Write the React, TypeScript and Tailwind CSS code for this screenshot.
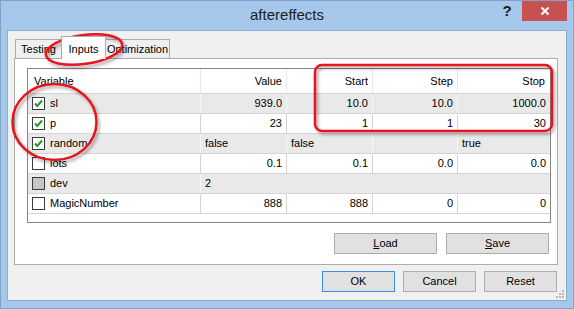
import React from "react";

type CBState = "on" | "off" | "gray";

function CheckBox({ state }: { state: CBState }) {
  return (
    <div
      className={`w-[13px] h-[13px] border border-[#3c3c3c] flex items-center justify-center shrink-0 ${
        state === "gray" ? "bg-[#c6c6c6]" : "bg-white"
      }`}
    >
      {state === "on" && (
        <svg width="11" height="11" viewBox="0 0 11 11">
          <path d="M2 5.5 L4.3 8 L9 2.5" stroke="#1f9a1f" strokeWidth="2" fill="none" />
        </svg>
      )}
    </div>
  );
}

type Cell = { t: string; a: "l" | "r" };

type Row = {
  name: string;
  cb: CBState;
  gray: boolean;
  cells: Cell[];
  span?: boolean;
};

const rows: Row[] = [
  {
    name: "sl",
    cb: "on",
    gray: true,
    cells: [
      { t: "939.0", a: "r" },
      { t: "10.0", a: "r" },
      { t: "10.0", a: "r" },
      { t: "1000.0", a: "r" },
    ],
  },
  {
    name: "p",
    cb: "on",
    gray: false,
    cells: [
      { t: "23", a: "r" },
      { t: "1", a: "r" },
      { t: "1", a: "r" },
      { t: "30", a: "r" },
    ],
  },
  {
    name: "random",
    cb: "on",
    gray: true,
    cells: [
      { t: "false", a: "l" },
      { t: "false", a: "l" },
      { t: "", a: "l" },
      { t: "true", a: "l" },
    ],
  },
  {
    name: "lots",
    cb: "off",
    gray: false,
    cells: [
      { t: "0.1", a: "r" },
      { t: "0.1", a: "r" },
      { t: "0.0", a: "r" },
      { t: "0.0", a: "r" },
    ],
  },
  {
    name: "dev",
    cb: "gray",
    gray: true,
    span: true,
    cells: [{ t: "2", a: "l" }],
  },
  {
    name: "MagicNumber",
    cb: "off",
    gray: false,
    cells: [
      { t: "888", a: "r" },
      { t: "888", a: "r" },
      { t: "0", a: "r" },
      { t: "0", a: "r" },
    ],
  },
];

const colW = ["w-[86px]", "w-[86px]", "w-[85px]", "w-[93px]"];

function DataRow({ r }: { r: Row }) {
  const sep = r.gray ? "border-[#f7f7f7]" : "border-[#d4d4d4]";
  return (
    <div
      className={`flex h-[20px] border-b border-[#d4d4d4] ${r.gray ? "bg-[#e9e9e9]" : "bg-white"}`}
    >
      <div className="w-[172px] flex items-center pl-[4px] gap-[5px]">
        <CheckBox state={r.cb} />
        <span>{r.name}</span>
      </div>
      {r.span ? (
        <div className={`flex-1 border-l ${sep} flex items-center pl-[4px]`}>{r.cells[0].t}</div>
      ) : (
        r.cells.map((c, i) => (
          <div
            key={i}
            className={`${colW[i]} border-l ${sep} flex items-center ${
              c.a === "r" ? "justify-end pr-[4px]" : "justify-start pl-[4px]"
            }`}
          >
            {c.t}
          </div>
        ))
      )}
    </div>
  );
}

function Btn({ children, w, focus }: { children: React.ReactNode; w: string; focus?: boolean }) {
  return (
    <div
      className={`${w} h-[21px] flex items-center justify-center border ${
        focus ? "border-[#3c8fe0]" : "border-[#adadad]"
      } bg-[#e1e1e1] text-[11px] text-black`}
    >
      {children}
    </div>
  );
}

export default function App() {
  return (
    <div className="relative w-[574px] h-[309px] bg-[#a5c8ea] shadow-[inset_0_0_0_1px_#7fa3c9] font-['Liberation_Sans',Arial,sans-serif] text-[11px] text-black overflow-hidden">
      {/* Title bar */}
      <div className="h-[31px] grid grid-cols-[1fr_auto_1fr]">
        <div />
        <div className="flex items-center justify-center pb-[1px] text-[15px] text-[#1e1e1e] font-['Liberation_Sans',Arial,sans-serif]">
          aftereffects
        </div>
        <div className="flex justify-end items-start pr-[7px] pt-[1px]">
          <div className="w-[30px] h-[20px] flex items-center justify-center text-[15px] font-bold text-[#1a1a1a] pt-[1px]">
            ?
          </div>
          <div className="w-[45px] h-[20px] bg-[#c75050] flex items-center justify-center">
            <svg width="10" height="10" viewBox="0 0 10 10">
              <path d="M1.5 1.5 L8.5 8.5 M8.5 1.5 L1.5 8.5" stroke="#fff" strokeWidth="2" />
            </svg>
          </div>
        </div>
      </div>

      {/* Client area */}
      <div className="relative ml-[8px] w-[558px] h-[269px] bg-[#f0f0f0] shadow-[0_0_0_1px_#8aaed3] flex flex-col pl-[6px] pt-[5px]">
        {/* Tabs */}
        <div className="flex items-end h-[22px] pl-[1px]">
          <div className="w-[47px] h-[19px] border border-b-0 border-[#acacac] bg-[#efefef] flex items-center justify-center pt-[1px]">
            Testing
          </div>
          <div className="relative z-10 w-[45px] h-[23px] -mb-px -ml-px border border-b-0 border-[#acacac] bg-white flex items-start justify-center pt-[4px]">
            Inputs
          </div>
          <div className="w-[65px] h-[19px] -ml-px border border-b-0 border-[#acacac] bg-[#efefef] flex items-center justify-center pt-[1px]">
            Optimization
          </div>
        </div>

        {/* Panel */}
        <div className="w-[544px] h-[207px] border border-[#acacac] bg-white flex flex-col pl-[12px] pt-[9px]">
          {/* Table */}
          <div className="w-[524px] h-[155px] border border-[#848484] bg-white flex flex-col">
            <div className="flex h-[25px] border-b border-[#d4d4d4] bg-white">
              <div className="w-[172px] flex items-center pl-[6px]">Variable</div>
              <div className="w-[86px] border-l border-[#e3e7ee] flex items-center justify-end pr-[4px]">Value</div>
              <div className="w-[86px] border-l border-[#e3e7ee] flex items-center justify-end pr-[4px]">Start</div>
              <div className="w-[85px] border-l border-[#e3e7ee] flex items-center justify-end pr-[4px]">Step</div>
              <div className="w-[93px] border-l border-[#e3e7ee] flex items-center justify-end pr-[5px]">Stop</div>
            </div>
            {rows.map((r) => (
              <DataRow key={r.name} r={r} />
            ))}
          </div>

          <div className="flex justify-end gap-[9px] pr-[8px] mt-[10px]">
            <Btn w="w-[103px]">
              <span className="underline">L</span>oad
            </Btn>
            <Btn w="w-[103px]">
              <span className="underline">S</span>ave
            </Btn>
          </div>
        </div>

        {/* Bottom buttons */}
        <div className="flex justify-end gap-[8px] pr-[9px] mt-[6px]">
          <Btn w="w-[73px]" focus>
            OK
          </Btn>
          <Btn w="w-[73px]">Cancel</Btn>
          <Btn w="w-[73px]">Reset</Btn>
        </div>

        {/* resize grip */}
        <svg className="absolute right-[1px] bottom-[1px]" width="10" height="10" viewBox="0 0 10 10">
          <rect x="7" y="1" width="2" height="2" fill="#b8b8b8" />
          <rect x="4" y="4" width="2" height="2" fill="#b8b8b8" />
          <rect x="7" y="4" width="2" height="2" fill="#b8b8b8" />
          <rect x="1" y="7" width="2" height="2" fill="#b8b8b8" />
          <rect x="4" y="7" width="2" height="2" fill="#b8b8b8" />
          <rect x="7" y="7" width="2" height="2" fill="#b8b8b8" />
        </svg>
      </div>

      {/* Red annotations */}
      <svg className="absolute left-0 top-0 pointer-events-none" width="574" height="309" viewBox="0 0 574 309">
        <defs>
          <filter id="sh" x="-20%" y="-30%" width="140%" height="160%">
            <feDropShadow dx="2" dy="2.5" stdDeviation="1.6" floodColor="#000" floodOpacity="0.35" />
          </filter>
        </defs>
        <g filter="url(#sh)" fill="none" stroke="#e5141c" strokeWidth="2.5">
          <ellipse cx="84" cy="49.5" rx="38.5" ry="14.5" transform="rotate(-8 84 49.5)" />
          <ellipse cx="54.5" cy="122" rx="42" ry="38" />
          <rect x="315" y="65" width="237" height="66" rx="7" />
        </g>
      </svg>
    </div>
  );
}
